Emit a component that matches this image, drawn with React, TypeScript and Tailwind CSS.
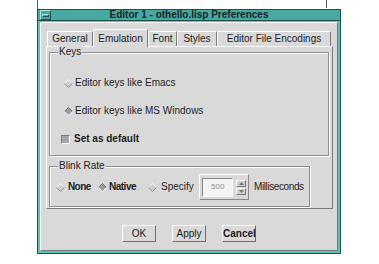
import React from "react";

const font = { fontFamily: '"Liberation Sans", Arial, sans-serif' };

const Diamond = ({ on = false }: { on?: boolean }) => (
  <svg width="9" height="9" viewBox="0 0 9 9" className="shrink-0">
    <polygon points="4.5,0.5 8.5,4.5 4.5,8.5 0.5,4.5" fill={on ? "#9c9c9c" : "#cfcfcf"} />
    <polyline points="0.5,4.5 4.5,0.5 8.5,4.5" fill="none" stroke={on ? "#6e6e6e" : "#ffffff"} strokeWidth="1" />
    <polyline points="0.5,4.5 4.5,8.5 8.5,4.5" fill="none" stroke={on ? "#ffffff" : "#8a8a8a"} strokeWidth="1" />
  </svg>
);

const Group = ({
  label,
  className,
  children,
}: {
  label: string;
  className: string;
  children: React.ReactNode;
}) => (
  <div className={`relative border border-[#8e8e8e] shadow-[inset_1px_1px_0_#fff,1px_1px_0_#fff] ${className}`}>
    <span className="absolute -top-[7px] left-[8px] bg-[#d9d9d9] px-[1px] text-[10px] leading-[12px] text-[#222]">
      {label}
    </span>
    {children}
  </div>
);

const tabs = [
  { name: "General", w: "w-[46px]" },
  { name: "Emulation", w: "w-[55px]" },
  { name: "Font", w: "w-[29px]" },
  { name: "Styles", w: "w-[40px]" },
  { name: "Editor File Encodings", w: "w-[114px]" },
];

const Button = ({ label, bold = false }: { label: string; bold?: boolean }) => (
  <button
    className={`w-[34px] h-[17px] bg-[#d9d9d9] border border-t-white border-l-white border-b-[#6f6f6f] border-r-[#6f6f6f] text-[10px] leading-none text-[#1a1a1a] ${bold ? "font-bold" : ""}`}
  >
    {label}
  </button>
);

export default function App() {
  return (
    <div className="relative w-[379px] h-[264px] bg-white overflow-hidden" style={font}>
      {/* bits of the window behind */}
      <div className="absolute left-[37px] top-0 w-px h-[9px] bg-[#555]" />
      <div className="absolute left-[326px] top-0 w-px h-[8px] bg-[#555]" />

      <div className="pl-[37px] pt-[9px]">
        <div className="w-[304px] h-[245px] border border-[#22524e] bg-[#5cc2ba] flex flex-col px-[2px] pb-[2px]">
          {/* title bar */}
          <div className="-mx-[2px] h-[11px] bg-[#49a8a1] border-b border-[#22524e] flex items-center">
            <div className="ml-[2px] w-[11px] h-[10px] border border-t-[#a9e6e1] border-l-[#a9e6e1] border-b-[#22524e] border-r-[#22524e] flex items-center justify-center">
              <div className="w-[7px] h-[3px] border border-t-[#a9e6e1] border-l-[#a9e6e1] border-b-[#22524e] border-r-[#22524e]" />
            </div>
            <div className="flex-1 text-center pr-[13px] text-[10px] leading-none font-bold text-[#172826]">
              Editor 1 - othello.lisp Preferences
            </div>
          </div>

          {/* client area */}
          <div className="flex-1 mt-[1px] bg-[#d9d9d9] border border-t-white border-l-white border-b-[#7a7a7a] border-r-[#7a7a7a] pl-[5px] pt-[6px] flex flex-col">
            {/* tabs */}
            <div className="flex items-end h-[17px] pl-[1px]">
              {tabs.map((t) => {
                const sel = t.name === "Emulation";
                return (
                  <div
                    key={t.name}
                    className={`${t.w} ${sel ? "h-[18px] -mb-px z-10 bg-[#d9d9d9]" : "h-[15px]"} border-t border-l border-r border-t-white border-l-white border-r-[#7a7a7a] flex items-center justify-center text-[10px] leading-none text-[#222]`}
                  >
                    {t.name}
                  </div>
                );
              })}
            </div>

            {/* panel */}
            <div className="w-[287px] h-[163px] border border-t-white border-l-white border-b-[#7a7a7a] border-r-[#7a7a7a] pl-[2px] pt-[5px] flex flex-col">
              <Group label="Keys" className="w-[280px] h-[104px]">
                <div className="flex flex-col pt-[23px] gap-[14px] text-[10px] leading-none text-[#1e1e1e]">
                  <div className="h-[14px] flex items-center gap-[2px] pl-[14px]">
                    <Diamond />
                    <span>Editor keys like Emacs</span>
                  </div>
                  <div className="h-[14px] flex items-center gap-[2px] pl-[14px]">
                    <Diamond on />
                    <span>Editor keys like MS Windows</span>
                  </div>
                  <div className="h-[14px] flex items-center gap-[4px] pl-[11px]">
                    <div className="w-[9px] h-[9px] bg-[#a6a6a6] border border-t-[#7a7a7a] border-l-[#7a7a7a] border-b-white border-r-white" />
                    <span className="font-bold">Set as default</span>
                  </div>
                </div>
              </Group>

              <Group label="Blink Rate" className="mt-[10px] w-[261px] h-[41px]">
                <div className="h-full flex items-center pl-[6px] pt-[1px] text-[10px] leading-none text-[#1e1e1e] whitespace-nowrap">
                  <Diamond />
                  <span className="ml-[3px] w-[22px] font-bold tracking-[-0.6px]">None</span>
                  <span className="ml-[8px]">
                    <Diamond on />
                  </span>
                  <span className="ml-[2px] w-[30px] font-bold tracking-[-0.5px]">Native</span>
                  <span className="ml-[9px]">
                    <Diamond />
                  </span>
                  <span className="ml-[4px] w-[33px]">Specify</span>
                  <div className="ml-[5px] w-[50px] h-[26px] border border-t-white border-l-white border-b-[#8a8a8a] border-r-[#8a8a8a] flex items-center pl-[2px] gap-[3px]">
                    <div className="w-[31px] h-[19px] bg-[#f4f4f4] border border-t-[#8a8a8a] border-l-[#8a8a8a] border-b-white border-r-white flex items-center pl-[8px] text-[8px] text-[#8a8a8a]">
                      500
                    </div>
                    <div className="flex flex-col gap-[1px]">
                      <div className="w-[10px] h-[7px] bg-[#cfcfcf] border border-t-white border-l-white border-b-[#7a7a7a] border-r-[#7a7a7a] flex items-center justify-center">
                        <svg width="5" height="3" viewBox="0 0 5 3"><polygon points="0,3 2.5,0 5,3" fill="#777" /></svg>
                      </div>
                      <div className="w-[10px] h-[7px] bg-[#cfcfcf] border border-t-white border-l-white border-b-[#7a7a7a] border-r-[#7a7a7a] flex items-center justify-center">
                        <svg width="5" height="3" viewBox="0 0 5 3"><polygon points="0,0 5,0 2.5,3" fill="#777" /></svg>
                      </div>
                    </div>
                  </div>
                  <span className="ml-[5px] tracking-[-0.4px]">Milliseconds</span>
                </div>
              </Group>
            </div>

            {/* buttons */}
            <div className="mt-[16px] flex pl-[76px] gap-[16px]">
              <Button label="OK" />
              <Button label="Apply" />
              <Button label="Cancel" bold />
            </div>
          </div>
        </div>
      </div>
    </div>
  );
}
